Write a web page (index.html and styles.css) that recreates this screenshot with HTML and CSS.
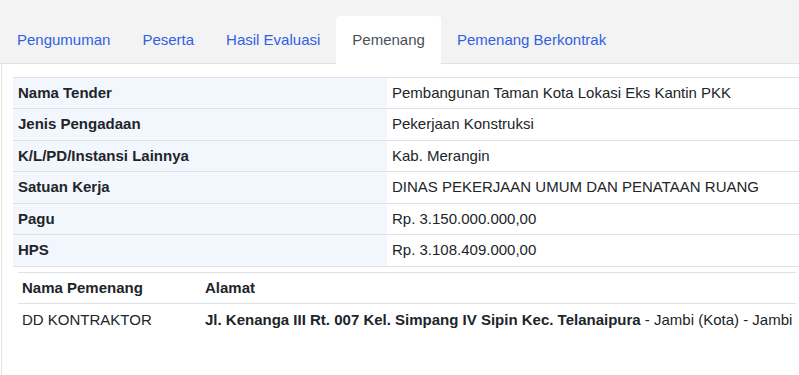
FILE: index.html
```html
<!DOCTYPE html>
<html lang="id">
<head>
  <meta charset="UTF-8" />
  <meta name="viewport" content="width=device-width, initial-scale=1.0"/>
  <title>Pemenang</title>
  <link rel="stylesheet" href="styles.css">
</head>
<body>
  <div class="tabs">
    <a class="tab" href="#">Pengumuman</a>
    <a class="tab" href="#">Peserta</a>
    <a class="tab" href="#">Hasil Evaluasi</a>
    <a class="tab active" href="#">Pemenang</a>
    <a class="tab" href="#">Pemenang Berkontrak</a>
  </div>

  <div class="panel">
    <table class="info">
      <tr><th>Nama Tender</th><td>Pembangunan Taman Kota Lokasi Eks Kantin PKK</td></tr>
      <tr><th>Jenis Pengadaan</th><td>Pekerjaan Konstruksi</td></tr>
      <tr><th>K/L/PD/Instansi Lainnya</th><td>Kab. Merangin</td></tr>
      <tr><th>Satuan Kerja</th><td>DINAS PEKERJAAN UMUM DAN PENATAAN RUANG</td></tr>
      <tr><th>Pagu</th><td>Rp. 3.150.000.000,00</td></tr>
      <tr><th>HPS</th><td>Rp. 3.108.409.000,00</td></tr>
    </table>

    <table class="winners">
      <tr><th class="col-name">Nama Pemenang</th><th>Alamat</th></tr>
      <tr>
        <td>DD KONTRAKTOR</td>
        <td><strong>Jl. Kenanga III Rt. 007 Kel. Simpang IV Sipin Kec. Telanaipura</strong> - Jambi (Kota) - Jambi</td>
      </tr>
    </table>
  </div>
</body>
</html>
```

FILE: styles.css
```css
body {
  margin: 0;
  font-family: 'Liberation Sans', Arial, sans-serif;
  font-size: 15px;
  color: #212529;
  background: #fff;
  overflow: hidden;
}

.tabs {
  display: flex;
  background: #f3f3f3;
  padding: 16px 0 0 1px;
  border-bottom: 1px solid #dee2e6;
}

.tab {
  padding: 13px 16px;
  line-height: 21px;
  color: #3160e3;
  text-decoration: none;
  white-space: nowrap;
}

.tab.active {
  background: #fff;
  color: #495057;
  border-radius: 4px 4px 0 0;
  margin-bottom: -1px;
  padding-bottom: 14px;
}

.panel {
  margin-left: 1px;
  border-left: 1px solid #e3e3e3;
  padding: 13px 0 0 11px;
  height: 298px;
}

table {
  border-collapse: collapse;
  white-space: nowrap;
}

.info {
  table-layout: fixed;
  width: 974px;
}

.info th,
.info td {
  padding: 5px 5px;
  line-height: 20.45px;
  border-top: 1px solid #dee2e6;
  text-align: left;
}

.info tr:last-child th,
.info tr:last-child td {
  border-bottom: 1px solid #dee2e6;
}

.info th {
  width: 364px;
  background: #f2f7fd;
  font-weight: bold;
}

.winners {
  margin: 5px 0 0 5px;
}

.winners th,
.winners td {
  padding: 5px 4px;
  line-height: 20px;
  text-align: left;
}

.winners th {
  border-top: 1px solid #dee2e6;
  border-bottom: 1px solid #dee2e6;
  font-weight: bold;
}

.winners .col-name {
  width: 175px;
}

.winners td {
  padding-top: 6px;
}
```
